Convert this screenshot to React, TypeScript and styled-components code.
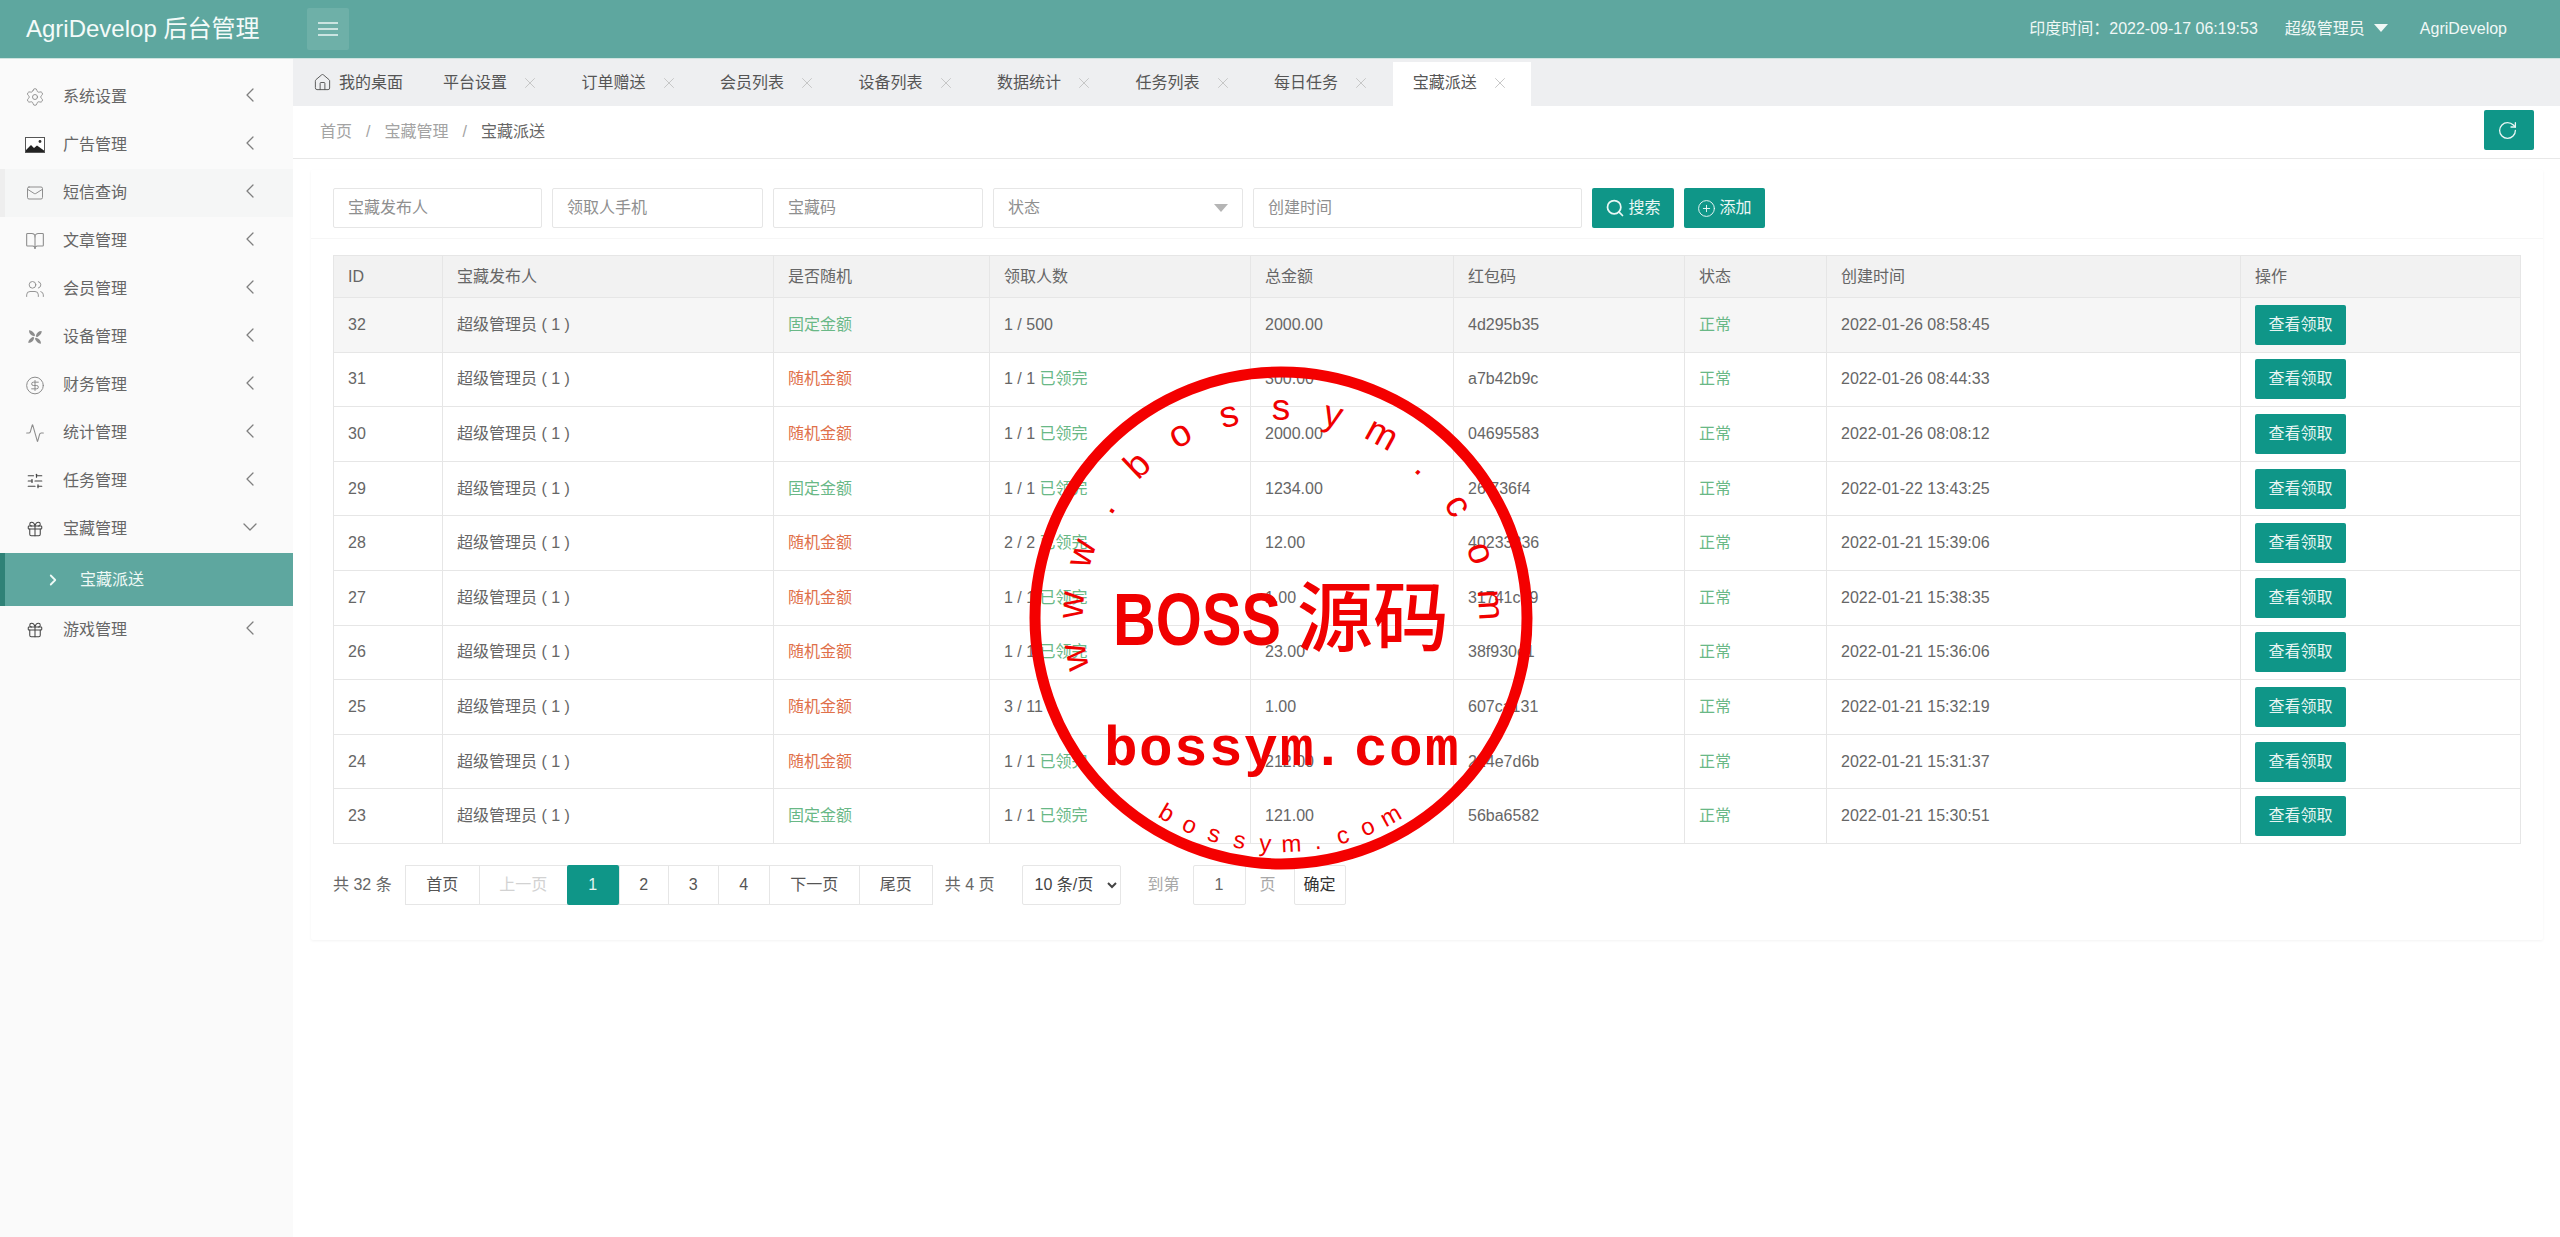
import React from "react";
import styled, { createGlobalStyle } from "styled-components";
import { Settings, Mail, BookOpen, Users, CircleDollarSign, Activity, SlidersHorizontal, Gift, ChevronLeft, ChevronDown, ChevronRight, X, House, RotateCw, Search, CirclePlus } from "lucide-react";

const Global = createGlobalStyle`
  html, body { margin: 0; padding: 0; background: #fff; }
  body { font-family: "Liberation Sans", "Noto Sans CJK SC", sans-serif; font-size: 16px; line-height: 20px; color: #666; }
  * { box-sizing: border-box; }
`;

const Page = styled.div`
  position: relative;
  width: 2560px;
  height: 1237px;
  overflow: hidden;
  display: flex;
  flex-direction: column;
`;
const Header = styled.header`
  height: 59px;
  flex: none;
  display: flex;
  align-items: center;
  background: #5ea79f;
  border-bottom: 1px solid #cfe3df;
  color: #f0f8f6;
`;
const Brand = styled.div`
  width: 307px;
  padding-left: 26px;
  font-size: 24px;
  line-height: 30px;
  color: #f4fbf9;
  white-space: nowrap;
`;
const Burger = styled.button`
  width: 42px;
  height: 42px;
  border: 0;
  padding: 0;
  border-radius: 2px;
  display: flex;
  align-items: center;
  justify-content: center;
  background: rgba(255, 255, 255, 0.1);
  color: #f4fbf9;
`;
const HeaderRight = styled.div`
  margin-left: auto;
  padding-right: 53px;
  display: flex;
  align-items: center;
  white-space: nowrap;
`;
const HeaderUser = styled.span`
  margin-left: 27px;
  display: flex;
  align-items: center;
`;
const Caret = styled.i`
  display: block;
  margin: -3px 0 0 9px;
  border-style: solid;
  border-width: 8px 7px 0;
  border-color: #f0f8f6 transparent transparent;
`;
const HeaderLink = styled.span`
  margin-left: 32px;
`;
const Body = styled.div`
  flex: 1;
  display: flex;
  min-height: 0;
`;
const Side = styled.nav`
  width: 293px;
  flex: none;
  background: #fafafa;
  padding-top: 14px;
`;
const NavRow = styled.div<{ $hover?: boolean }>`
  height: 48px;
  display: flex;
  align-items: center;
  padding-left: ${(p) => (p.$hover ? 20 : 25)}px;
  padding-right: 31px;
  border-left: ${(p) => (p.$hover ? "5px solid #eeeeee" : "0")};
  background: ${(p) => (p.$hover ? "#f5f6f6" : "transparent")};
  color: #666;
`;
const NavIcon = styled.span<{ $dark?: boolean }>`
  width: 20px;
  height: 20px;
  margin-right: 18px;
  display: flex;
  align-items: center;
  justify-content: center;
  flex: none;
  color: ${(p) => (p.$dark ? "#444" : "#8c8c8c")};
`;
const NavLabel = styled.span`
  flex: 1;
`;
const NavArrow = styled.span`
  display: flex;
  margin-top: -4px;
  color: #7f7f7f;
`;
const SubRow = styled.div`
  height: 53px;
  display: flex;
  align-items: center;
  padding-left: 39px;
  border-left: 5px solid #2f8277;
  background: #5ea79f;
  color: #eef9f6;
`;
const SubLabel = styled.span`
  margin-left: 18px;
`;
const Main = styled.main`
  flex: 1;
  min-width: 0;
  display: flex;
  flex-direction: column;
`;
const Tabs = styled.div`
  height: 47px;
  flex: none;
  display: flex;
  align-items: flex-end;
  background: #eeeff1;
  color: #555;
`;
const Tab = styled.div<{ $active?: boolean }>`
  height: ${(p) => (p.$active ? 44 : 47)}px;
  display: flex;
  align-items: center;
  padding: ${(p) => (p.$active ? "0 22.5px 3px 20px" : "0 22.5px 0 20px")};
  background: ${(p) => (p.$active ? "#fff" : "transparent")};
`;
const HomeTab = styled(Tab)`
  padding-right: 20px;
  gap: 7px;
`;
const TabClose = styled.span`
  margin-left: 14px;
  display: flex;
  color: #c2c2c2;
`;
const Crumbs = styled.div`
  height: 53px;
  flex: none;
  display: flex;
  align-items: center;
  padding: 0 26px 0 27px;
  border-bottom: 1px solid #e8e8e8;
  color: #a3a3a3;
`;
const CrumbSep = styled.span`
  margin: 0 14px;
`;
const CrumbNow = styled.span`
  color: #666;
`;
const Refresh = styled.button`
  margin-left: auto;
  margin-top: -4px;
  width: 50px;
  height: 40px;
  padding: 0 3px 0 0;
  border: 0;
  border-radius: 2px;
  display: flex;
  align-items: center;
  justify-content: center;
  background: #0f9688;
  color: #e9f6f4;
`;
const Card = styled.section`
  width: 2232px;
  height: 770px;
  margin: 11px 0 0 18px;
  background: #fff;
  border-radius: 2px;
  box-shadow: 0 1px 3px rgba(0, 0, 0, 0.05);
`;
const Filters = styled.div`
  height: 69px;
  padding: 18px 0 0 22px;
  display: flex;
  gap: 10px;
  border-bottom: 1px solid #f6f6f6;
`;
const Field = styled.div<{ $w: number }>`
  width: ${(p) => p.$w}px;
  height: 40px;
  padding: 0 14px;
  display: flex;
  align-items: center;
  justify-content: space-between;
  border: 1px solid #e6e6e6;
  border-radius: 2px;
  color: #8f8f8f;
`;
const SelectCaret = styled.i`
  display: block;
  border-style: solid;
  border-width: 8px 7px 0;
  border-color: #b5b5b5 transparent transparent;
`;
const ActionBtn = styled.button<{ $w: number }>`
  width: ${(p) => p.$w}px;
  height: 40px;
  padding: 0;
  border: 0;
  border-radius: 2px;
  display: flex;
  align-items: center;
  justify-content: center;
  gap: 3px;
  background: #0f9688;
  color: #eaf7f5;
  font: inherit;
`;
const TableWrap = styled.div`
  padding: 16px 0 0 22px;
`;
const Table = styled.table`
  width: 2187px;
  table-layout: fixed;
  border-collapse: collapse;
`;
const Th = styled.th`
  height: 42px;
  padding: 0 13px 0 14px;
  background: #f2f2f2;
  border: 1px solid #e6e6e6;
  text-align: left;
  font-weight: 400;
  color: #666;
`;
const Tr = styled.tr<{ $hover?: boolean }>`
  background: ${(p) => (p.$hover ? "#f6f6f6" : "#fff")};
`;
const Td = styled.td<{ $c?: string }>`
  height: 54.6px;
  padding: 0 13px 0 14px;
  border: 1px solid #e6e6e6;
  color: ${(p) => p.$c || "#666"};
  white-space: nowrap;
`;
const Green = styled.span`
  color: #69b886;
`;
const ViewBtn = styled.button`
  width: 91px;
  height: 40px;
  padding: 0;
  border: 0;
  border-radius: 2px;
  display: block;
  background: #0f9688;
  color: #e6f5f2;
  font: inherit;
`;
const Pager = styled.div`
  height: 40px;
  margin: 21px 0 0 22px;
  display: flex;
  align-items: center;
  white-space: nowrap;
`;
const PagerGroup = styled.div`
  height: 40px;
  margin-left: 13px;
  display: flex;
  border: 1px solid #e6e6e6;
  border-left: 0;
`;
const PageLink = styled.span<{ $w: number; $active?: boolean; $off?: boolean }>`
  width: ${(p) => p.$w}px;
  margin: ${(p) => (p.$active ? "-1px 0" : "0")};
  display: flex;
  align-items: center;
  justify-content: center;
  border-left: ${(p) => (p.$active ? "0" : "1px solid #e6e6e6")};
  border-radius: ${(p) => (p.$active ? "2px" : "0")};
  background: ${(p) => (p.$active ? "#0f9688" : "#fff")};
  color: ${(p) => (p.$active ? "#e6f5f2" : p.$off ? "#d2d2d2" : "#555")};
`;
const PagerText = styled.span<{ $ml: number; $soft?: boolean }>`
  margin-left: ${(p) => p.$ml}px;
  color: ${(p) => (p.$soft ? "#a8a8a8" : "#666")};
`;
const PageSize = styled.select`
  width: 99px;
  height: 40px;
  margin-left: 27px;
  padding: 0 8px;
  background: #fff;
  border: 1px solid #e6e6e6;
  border-radius: 2px;
  font: inherit;
  color: #444;
`;
const PageInput = styled.div`
  width: 53px;
  height: 40px;
  margin-left: 13px;
  display: flex;
  align-items: center;
  justify-content: center;
  border: 1px solid #e6e6e6;
  border-radius: 2px;
  color: #666;
`;
const PageGo = styled.button`
  width: 52px;
  height: 40px;
  margin-left: 18px;
  padding: 0;
  background: #fff;
  border: 1px solid #e6e6e6;
  border-radius: 2px;
  font: inherit;
  color: #333;
`;

const Stamp = styled.svg`
  position: absolute;
  left: 1021px;
  top: 358px;
  width: 520px;
  height: 520px;
  pointer-events: none;
`;
const Ring = styled.circle`
  fill: none;
  stroke: #f40000;
  stroke-width: 11;
`;
const StampText = styled.text<{ $size: number; $bold?: boolean; $mono?: boolean; $cjk?: boolean }>`
  fill: #f00000;
  font-size: ${(p) => p.$size}px;
  font-weight: ${(p) => (p.$bold ? 700 : p.$cjk ? 500 : 400)};
  font-family: ${(p) =>
    p.$mono ? '"Liberation Mono", monospace' : p.$cjk ? '"Noto Sans CJK SC", sans-serif' : '"Liberation Sans", sans-serif'};
`;

const ImageIcon = () => (
  <svg width="20" height="16" viewBox="0 0 20 16">
    <rect x="0.5" y="0.5" width="19" height="15" fill="#fff" stroke="#555" />
    <path d="M1 15 L1 13 L6 8 L9 11 L12 8.5 L19 13.5 L19 15 Z" fill="#222" />
    <circle cx="15" cy="4.5" r="1.4" fill="#333" />
  </svg>
);

const PinwheelIcon = () => (
  <svg width="18" height="18" viewBox="0 0 18 18" fill="currentColor">
    <path d="M8.2 8.2 C5 7.6 3 5.6 3 2.4 C5.4 2 7.8 4.4 9.2 7.2 Z" />
    <path d="M9.8 8.2 C10.4 5 12.4 3 15.6 3 C16 5.4 13.6 7.8 10.8 9.2 Z" />
    <path d="M9.8 9.8 C13 10.4 15 12.4 15 15.6 C12.6 16 10.2 13.6 8.8 10.8 Z" />
    <path d="M8.2 9.8 C7.6 13 5.6 15 2.4 15 C2 12.6 4.4 10.2 7.2 8.8 Z" />
  </svg>
);

const BurgerIcon = () => (
  <svg width="20" height="14" viewBox="0 0 20 14" stroke="currentColor" strokeWidth="1.4">
    <line x1="0" y1="1" x2="20" y2="1" />
    <line x1="0" y1="7" x2="20" y2="7" />
    <line x1="0" y1="13" x2="20" y2="13" />
  </svg>
);

const nav = [
  ["系统设置", <Settings size={22} strokeWidth={1.1} />],
  ["广告管理", <ImageIcon />, "dark"],
  ["短信查询", <Mail size={18} strokeWidth={1.3} />, "hover"],
  ["文章管理", <BookOpen size={22} strokeWidth={1.3} />],
  ["会员管理", <Users size={22} strokeWidth={1.1} />],
  ["设备管理", <PinwheelIcon />],
  ["财务管理", <CircleDollarSign size={21} strokeWidth={1.2} />],
  ["统计管理", <Activity size={20} strokeWidth={1.3} />],
  ["任务管理", <SlidersHorizontal size={18} strokeWidth={1.6} />, "dark"],
] as const;

const tabs = ["平台设置", "订单赠送", "会员列表", "设备列表", "数据统计", "任务列表", "每日任务"];

const cols = [109, 331, 216, 261, 203, 231, 142, 414, 280];
const heads = ["ID", "宝藏发布人", "是否随机", "领取人数", "总金额", "红包码", "状态", "创建时间", "操作"];
const FIX = "固定金额";
const RND = "随机金额";
const rows: [number, string, string, boolean, string, string, string][] = [
  [32, FIX, "1 / 500", false, "2000.00", "4d295b35", "2022-01-26 08:58:45"],
  [31, RND, "1 / 1", true, "300.00", "a7b42b9c", "2022-01-26 08:44:33"],
  [30, RND, "1 / 1", true, "2000.00", "04695583", "2022-01-26 08:08:12"],
  [29, FIX, "1 / 1", true, "1234.00", "26f736f4", "2022-01-22 13:43:25"],
  [28, RND, "2 / 2", true, "12.00", "40233236", "2022-01-21 15:39:06"],
  [27, RND, "1 / 1", true, "1.00", "31741ce9", "2022-01-21 15:38:35"],
  [26, RND, "1 / 1", true, "23.00", "38f930e1", "2022-01-21 15:36:06"],
  [25, RND, "3 / 11", false, "1.00", "607ca131", "2022-01-21 15:32:19"],
  [24, RND, "1 / 1", true, "212.00", "224e7d6b", "2022-01-21 15:31:37"],
  [23, FIX, "1 / 1", true, "121.00", "56ba6582", "2022-01-21 15:30:51"],
];

const pages: [string, number, boolean?, boolean?][] = [
  ["首页", 74],
  ["上一页", 88, false, true],
  ["1", 52, true],
  ["2", 49],
  ["3", 50],
  ["4", 51],
  ["下一页", 90],
  ["尾页", 73],
];

const CX = 1281;
const CY = 618;
const topArc = "www.bossym.com".split("");
const bottomArc = "bossym.com".split("");
const domainX = "1104 1139 1174 1209 1244 1280 1311 1340 1354 1389 1425";

export default function App() {
  return (
    <Page>
      <Global />
      <Header>
        <Brand>AgriDevelop 后台管理</Brand>
        <Burger>
          <BurgerIcon />
        </Burger>
        <HeaderRight>
          <span>印度时间：2022-09-17 06:19:53</span>
          <HeaderUser>
            超级管理员
            <Caret />
          </HeaderUser>
          <HeaderLink>AgriDevelop</HeaderLink>
        </HeaderRight>
      </Header>
      <Body>
        <Side>
          {nav.map(([label, icon, mode]: any) => (
            <NavRow key={label} $hover={mode === "hover"}>
              <NavIcon $dark={mode === "dark"}>{icon}</NavIcon>
              <NavLabel>{label}</NavLabel>
              <NavArrow>
                <ChevronLeft size={24} strokeWidth={1.3} />
              </NavArrow>
            </NavRow>
          ))}
          <NavRow>
            <NavIcon $dark>
              <Gift size={18} strokeWidth={1.4} />
            </NavIcon>
            <NavLabel>宝藏管理</NavLabel>
            <NavArrow>
              <ChevronDown size={24} strokeWidth={1.3} />
            </NavArrow>
          </NavRow>
          <SubRow>
            <ChevronRight size={18} strokeWidth={2.4} />
            <SubLabel>宝藏派送</SubLabel>
          </SubRow>
          <NavRow>
            <NavIcon $dark>
              <Gift size={18} strokeWidth={1.4} />
            </NavIcon>
            <NavLabel>游戏管理</NavLabel>
            <NavArrow>
              <ChevronLeft size={24} strokeWidth={1.3} />
            </NavArrow>
          </NavRow>
        </Side>
        <Main>
          <Tabs>
            <HomeTab>
              <House size={19} strokeWidth={1.2} />
              我的桌面
            </HomeTab>
            {tabs.map((t) => (
              <Tab key={t}>
                {t}
                <TabClose>
                  <X size={18} strokeWidth={1.2} />
                </TabClose>
              </Tab>
            ))}
            <Tab $active>
              宝藏派送
              <TabClose>
                <X size={18} strokeWidth={1.2} />
              </TabClose>
            </Tab>
          </Tabs>
          <Crumbs>
            首页
            <CrumbSep>/</CrumbSep>
            宝藏管理
            <CrumbSep>/</CrumbSep>
            <CrumbNow>宝藏派送</CrumbNow>
            <Refresh>
              <RotateCw size={21} strokeWidth={1.5} />
            </Refresh>
          </Crumbs>
          <Card>
            <Filters>
              <Field $w={209}>宝藏发布人</Field>
              <Field $w={211}>领取人手机</Field>
              <Field $w={210}>宝藏码</Field>
              <Field $w={250}>
                状态
                <SelectCaret />
              </Field>
              <Field $w={329}>创建时间</Field>
              <ActionBtn $w={82}>
                <Search size={20} strokeWidth={2.1} />
                搜索
              </ActionBtn>
              <ActionBtn $w={81}>
                <CirclePlus size={19} strokeWidth={1.2} />
                添加
              </ActionBtn>
            </Filters>
            <TableWrap>
              <Table>
                <colgroup>
                  {cols.map((w, i) => (
                    <col key={i} width={w} />
                  ))}
                </colgroup>
                <thead>
                  <tr>
                    {heads.map((h) => (
                      <Th key={h}>{h}</Th>
                    ))}
                  </tr>
                </thead>
                <tbody>
                  {rows.map(([id, kind, count, done, total, code, time], i) => (
                    <Tr key={id} $hover={i === 0}>
                      <Td>{id}</Td>
                      <Td>超级管理员 ( 1 )</Td>
                      <Td $c={kind === FIX ? "#69b886" : "#e0704a"}>{kind}</Td>
                      <Td>
                        {count}
                        {done && <Green> 已领完</Green>}
                      </Td>
                      <Td>{total}</Td>
                      <Td>{code}</Td>
                      <Td $c="#69b886">正常</Td>
                      <Td>{time}</Td>
                      <Td>
                        <ViewBtn>查看领取</ViewBtn>
                      </Td>
                    </Tr>
                  ))}
                </tbody>
              </Table>
            </TableWrap>
            <Pager>
              <span>共 32 条</span>
              <PagerGroup>
                {pages.map(([t, w, a, off]) => (
                  <PageLink key={t} $w={w} $active={a} $off={off}>
                    {t}
                  </PageLink>
                ))}
              </PagerGroup>
              <PagerText $ml={12}>共 4 页</PagerText>
              <PageSize defaultValue="10">
                <option value="10">10 条/页</option>
              </PageSize>
              <PagerText $ml={27} $soft>
                到第
              </PagerText>
              <PageInput>1</PageInput>
              <PagerText $ml={14} $soft>
                页
              </PagerText>
              <PageGo>确定</PageGo>
            </Pager>
          </Card>
        </Main>
      </Body>
      <Stamp viewBox="1021 358 520 520">
        <Ring cx={CX} cy={CY} r={246} />
        {topArc.map((c, i) => (
          <StampText
            key={i}
            $size={37}
            x={CX}
            y={CY - 198}
            textAnchor="middle"
            transform={`rotate(${(i - 7) * 14.4} ${CX} ${CY})`}
          >
            {c}
          </StampText>
        ))}
        <StampText $size={74} $bold x={1113} y={645} textLength={168} lengthAdjust="spacingAndGlyphs">
          BOSS
        </StampText>
        <StampText $size={76} $cjk x={1297} y={645} textLength={152} lengthAdjust="spacing">
          源码
        </StampText>
        <StampText $size={56} $bold $mono x={domainX} y={765}>
          bossym. com
        </StampText>
        {bottomArc.map((c, i) => (
          <StampText
            key={i}
            $size={24}
            x={CX}
            y={CY + 234}
            textAnchor="middle"
            transform={`rotate(${-(i - 4.6) * 6.6} ${CX} ${CY})`}
          >
            {c}
          </StampText>
        ))}
      </Stamp>
    </Page>
  );
}
